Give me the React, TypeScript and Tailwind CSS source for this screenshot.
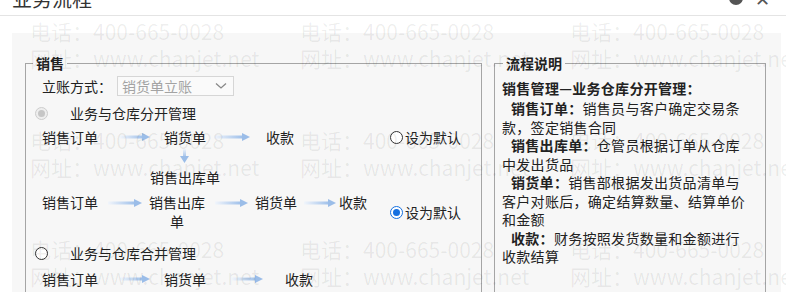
import React, { useId } from "react";

// Sales workflow settings dialog (cut off at the top) with a phone/URL watermark.

const FONT = "font-['Noto_Sans_CJK_SC','Microsoft_YaHei',sans-serif]";

function ArrowRight({ w = 30 }: { w?: number }) {
  const id = useId();
  return (
    <svg width={w} height={10} viewBox={`0 0 ${w} 10`} className="shrink-0">
      <defs>
        <linearGradient id={id} x1="0" x2="1" y1="0" y2="0">
          <stop offset="0" stopColor="#f1f5fb" />
          <stop offset="1" stopColor="#9fc0ea" />
        </linearGradient>
      </defs>
      <rect x="0" y="3.5" width={w - 7} height="3" fill={`url(#${id})`} />
      <polygon points={`${w - 8},1 ${w},5 ${w - 8},9`} fill="#9bbde8" />
    </svg>
  );
}

function ArrowDown() {
  const id = useId();
  return (
    <svg width={9} height={14} viewBox="0 0 9 14">
      <defs>
        <linearGradient id={id} x1="0" x2="0" y1="0" y2="1">
          <stop offset="0" stopColor="#eef3fa" />
          <stop offset="1" stopColor="#a3c2ea" />
        </linearGradient>
      </defs>
      <rect x="3" y="0" width="3" height="8" fill={`url(#${id})`} />
      <polygon points="0,7 9,7 4.5,14" fill="#9bbde8" />
    </svg>
  );
}

function Radio({ state }: { state: "off" | "on" | "disabled" }) {
  if (state === "disabled") {
    return (
      <span className="flex h-[13px] w-[13px] shrink-0 items-center justify-center rounded-full border border-[#cdcdcd] bg-[#eeeeee]">
        <span className="h-[7px] w-[7px] rounded-full bg-[#c6c6c6]" />
      </span>
    );
  }
  if (state === "on") {
    return (
      <span className="flex h-[13px] w-[13px] shrink-0 items-center justify-center rounded-full border-[1.5px] border-[#1570e0] bg-white">
        <span className="h-[7px] w-[7px] rounded-full bg-[#1570e0]" />
      </span>
    );
  }
  return <span className="h-[13px] w-[13px] shrink-0 rounded-full border border-[#333] bg-white" />;
}

function DefaultRadio({ on }: { on?: boolean }) {
  return (
    <div className="flex items-center gap-[2px]">
      <Radio state={on ? "on" : "off"} />
      <span>设为默认</span>
    </div>
  );
}

const notes = [
  { label: "销售订单：", text: "销售员与客户确定交易条款，签定销售合同" },
  { label: "销售出库单：", text: "仓管员根据订单从仓库中发出货品" },
  { label: "销货单：", text: "销售部根据发出货品清单与客户对账后，确定结算数量、结算单价和金额" },
  { label: "收款：", text: "财务按照发货数量和金额进行收款结算" }
];

export default function App() {
  return (
    <div className={`relative h-[292px] w-[786px] overflow-hidden bg-white text-[14px] text-[#222] ${FONT}`}>
      {/* dialog header, mostly scrolled out of view */}
      <div className="flex h-[16px] items-start justify-between overflow-hidden border-b border-[#e4e4e4] pl-[12px] pr-[16px]">
        <div className="-mt-[11px] text-[20px] leading-[20px] text-[#333]">业务流程</div>
        <div className="-mt-[9px] flex items-center gap-[12px]">
          <span className="h-[14px] w-[14px] rounded-full bg-[#555]" />
          <span className="text-[18px] leading-[14px] text-[#555]">✕</span>
        </div>
      </div>

      <div className="ml-[12px] mt-[17px] flex h-[260px] w-[769px] gap-[12px] bg-[#f7f7f7] pl-[13px] pt-[20px]">
        <fieldset className="h-[260px] w-[457px] border border-[#a5a5a5]">
          <legend className="ml-[7px] px-[3px] text-[14px] font-bold leading-[20px]">销售</legend>
          <div className="pl-[16px] pt-[2px] leading-[19px]">
            <div className="flex h-[22px] items-center">
              <span>立账方式：</span>
              <div className="ml-[5px] flex h-[20px] w-[117px] items-center justify-between border border-[#d6d6d6] bg-[#fafafa] pl-[4px] pr-[6px] text-[#a3a3a3]">
                <span>销货单立账</span>
                <svg width="12" height="8" viewBox="0 0 12 8">
                  <polyline points="1,1.5 6,6 11,1.5" fill="none" stroke="#888" strokeWidth="1.3" />
                </svg>
              </div>
            </div>

            <div className="-ml-[7px] mt-[5px] flex h-[22px] items-center gap-[22px]">
              <Radio state="disabled" />
              <span>业务与仓库分开管理</span>
            </div>

            <div className="mt-[1px] flex h-[24px] items-center">
              <div className="flex w-[348px] items-center">
                <span>销售订单</span>
                <span className="ml-[22px]"><ArrowRight w={30} /></span>
                <span className="ml-[14px]">销货单</span>
                <span className="ml-[8px]"><ArrowRight w={36} /></span>
                <span className="ml-[16px]">收款</span>
              </div>
              <DefaultRadio />
            </div>

            <div className="flex h-[15px] w-[250px] justify-start pl-[138px]">
              <ArrowDown />
            </div>

            <div className="mt-[1px] flex h-[24px] items-center pl-[108px]">销售出库单</div>

            <div className="mt-[4px] flex items-center">
              <div className="flex w-[348px] items-start">
                <span>销售订单</span>
                <span className="ml-[10px] mt-[5px]"><ArrowRight w={34} /></span>
                <span className="ml-[6px] w-[58px] text-center">销售出库单</span>
                <span className="ml-[9px] mt-[5px]"><ArrowRight w={33} /></span>
                <span className="ml-[7px]">销货单</span>
                <span className="ml-[7px] mt-[5px]"><ArrowRight w={32} /></span>
                <span className="ml-[3px]">收款</span>
              </div>
              <DefaultRadio on />
            </div>

            <div className="-ml-[7px] mt-[11px] flex h-[22px] items-center gap-[22px]">
              <Radio state="off" />
              <span>业务与仓库合并管理</span>
            </div>

            <div className="mt-[3px] flex h-[24px] items-center">
              <span>销售订单</span>
              <span className="ml-[22px]"><ArrowRight w={30} /></span>
              <span className="ml-[14px]">销货单</span>
              <span className="ml-[26px]"><ArrowRight w={31} /></span>
              <span className="ml-[22px]">收款</span>
            </div>
          </div>
        </fieldset>

        <fieldset className="h-[260px] w-[272px] border border-[#a5a5a5]">
          <legend className="ml-[8px] px-[3px] text-[14px] font-bold leading-[20px]">流程说明</legend>
          <div className="pl-[7px] pt-[5px] tracking-[0.3px]">
            <div className="font-bold leading-[20px]">销售管理—业务仓库分开管理：</div>
            <div className="mt-[1px] w-[247px] leading-[18.5px]">
              {notes.map((n) => (
                <p key={n.label} className="indent-[9px]">
                  <b>{n.label}</b>
                  {n.text}
                </p>
              ))}
            </div>
          </div>
        </fieldset>
      </div>

      {/* watermark */}
      <div className="pointer-events-none absolute left-[30px] top-[18px] grid grid-cols-[270px_270px_270px] text-[21px] leading-[27px] text-black/[0.07]">
        {Array.from({ length: 9 }).map((_, i) => (
          <div key={i} className="h-[109px] whitespace-nowrap">
            <div>电话：400-665-0028</div>
            <div>网址：www.chanjet.net</div>
          </div>
        ))}
      </div>
    </div>
  );
}
